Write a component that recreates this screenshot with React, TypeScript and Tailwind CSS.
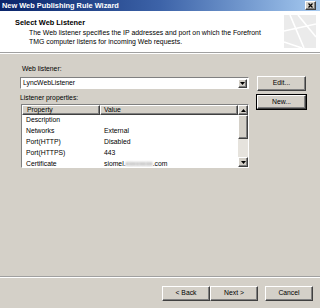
import React from "react";

const raised =
  "bg-[#d4d0c8] border border-t-white border-l-white border-r-[#404040] border-b-[#404040] shadow-[inset_-1px_-1px_#808080]";
const sunken =
  "border border-t-[#808080] border-l-[#808080] border-r-white border-b-white";

function Btn({ label, className = "" }: { label: string; className?: string }) {
  return (
    <div className={`${raised} flex items-center justify-center text-[6.8px] text-black ${className}`}>
      {label}
    </div>
  );
}

function Arrow({ dir }: { dir: "up" | "down" }) {
  return (
    <svg width="5" height="3" viewBox="0 0 5 3">
      {dir === "down" ? <polygon points="0,0 5,0 2.5,3" fill="#000" /> : <polygon points="0,3 5,3 2.5,0" fill="#000" />}
    </svg>
  );
}

const rows: [string, React.ReactNode][] = [
  ["Description", ""],
  ["Networks", "External"],
  ["Port(HTTP)", "Disabled"],
  ["Port(HTTPS)", "443"],
  [
    "Certificate",
    <span>
      siomel.<span className="blur-[1px] text-[#777]">xxxxxxxx</span>.com
    </span>,
  ],
];

export default function App() {
  return (
    <div
      className="w-[320px] h-[308px] bg-[#d4d0c8] flex flex-col overflow-hidden text-black"
      style={{ fontFamily: '"Liberation Sans", Arial, sans-serif' }}
    >
      {/* Title bar */}
      <div className="h-[11px] bg-gradient-to-r from-[#0a246a] via-[#3d63a8] to-[#a6caf0] flex items-center justify-between pl-[2px] pr-[4px]">
        <span className="text-white font-bold text-[7.4px] leading-none">New Web Publishing Rule Wizard</span>
        <div className={`${raised} w-[11px] h-[9px] flex items-center justify-center`}>
          <svg width="5" height="5" viewBox="0 0 5 5">
            <path d="M0.5 0.5 L4.5 4.5 M4.5 0.5 L0.5 4.5" stroke="#000" strokeWidth="1.2" />
          </svg>
        </div>
      </div>

      {/* Header */}
      <div className="h-[41px] bg-white flex justify-between">
        <div className="pl-[15px] pt-[8px]">
          <div className="font-bold text-[7.4px] leading-[8px]">Select Web Listener</div>
          <div className="pl-[14px] mt-[1px] text-[6.9px] leading-[9px]">
            <div>The Web listener specifies the IP addresses and port on which the Forefront</div>
            <div>TMG computer listens for incoming Web requests.</div>
          </div>
        </div>
        <div className="pt-[4px] pr-[4px]">
          <svg width="32" height="33" viewBox="0 0 32 33">
            <rect width="32" height="33" fill="#ebebeb" />
            <path d="M6 0 L20 33 M14 0 L32 22 M0 16 L32 9 M0 27 L18 33" stroke="#fff" strokeWidth="1.6" fill="none" />
          </svg>
        </div>
      </div>
      <div className="h-[2px] border-t border-t-[#a0a0a0] border-b border-b-white" />

      {/* Content */}
      <div className="flex-1 flex pl-[20px]">
        <div className="w-[229px] flex flex-col">
          <div className="mt-[11px] pl-[2px] text-[6.8px] leading-[8px]">Web listener:</div>
          <div className={`mt-[4px] h-[12px] ${sunken} bg-white flex items-center`}>
            <span className="flex-1 pl-[2px] text-[6.8px] leading-none">LyncWebListener</span>
            <div className={`${raised} w-[9px] h-[9px] mr-[1px] flex items-center justify-center`}>
              <Arrow dir="down" />
            </div>
          </div>
          <div className="mt-[5px] text-[6.8px] leading-[8px]">Listener properties:</div>
          <div className={`mt-[2px] ml-[1px] h-[64px] ${sunken} bg-white flex overflow-hidden`}>
            <div className="flex-1 flex flex-col">
              <div className="h-[10px] flex shrink-0">
                <div className={`${raised} w-[78px] h-[10px] pl-[4px] flex items-center text-[6.8px]`}>Property</div>
                <div className={`${raised} flex-1 h-[10px] pl-[3px] flex items-center text-[6.8px]`}>Value</div>
              </div>
              {rows.map(([k, v], i) => (
                <div key={i} className="h-[11px] shrink-0 flex items-center text-[6.8px]">
                  <span className="w-[78px] pl-[4px]">{k}</span>
                  <span className="pl-[4px]">{v}</span>
                </div>
              ))}
            </div>
            <div className="w-[10px] flex flex-col bg-[#e6e3dd]">
              <div className={`${raised} h-[10px] flex items-center justify-center shrink-0`}>
                <Arrow dir="up" />
              </div>
              <div className={`${raised} h-[24px] shrink-0`} />
              <div className="flex-1" />
              <div className={`${raised} h-[10px] flex items-center justify-center shrink-0`}>
                <Arrow dir="down" />
              </div>
            </div>
          </div>
        </div>
        <div className="ml-[8px] flex flex-col">
          <Btn label="Edit..." className="mt-[22px] w-[49px] h-[15px]" />
          <Btn label="New..." className="mt-[4px] w-[49px] h-[14px] outline outline-1 outline-black" />
        </div>
      </div>

      {/* Footer */}
      <div className="h-[2px] border-t border-t-[#a0a0a0] border-b border-b-white" />
      <div className="h-[30px] flex items-start pt-[8px] pl-[162px]">
        <Btn label="< Back" className="w-[48px] h-[15px]" />
        <Btn label="Next >" className="w-[48px] h-[15px]" />
        <Btn label="Cancel" className="ml-[7px] w-[48px] h-[15px]" />
      </div>
    </div>
  );
}
